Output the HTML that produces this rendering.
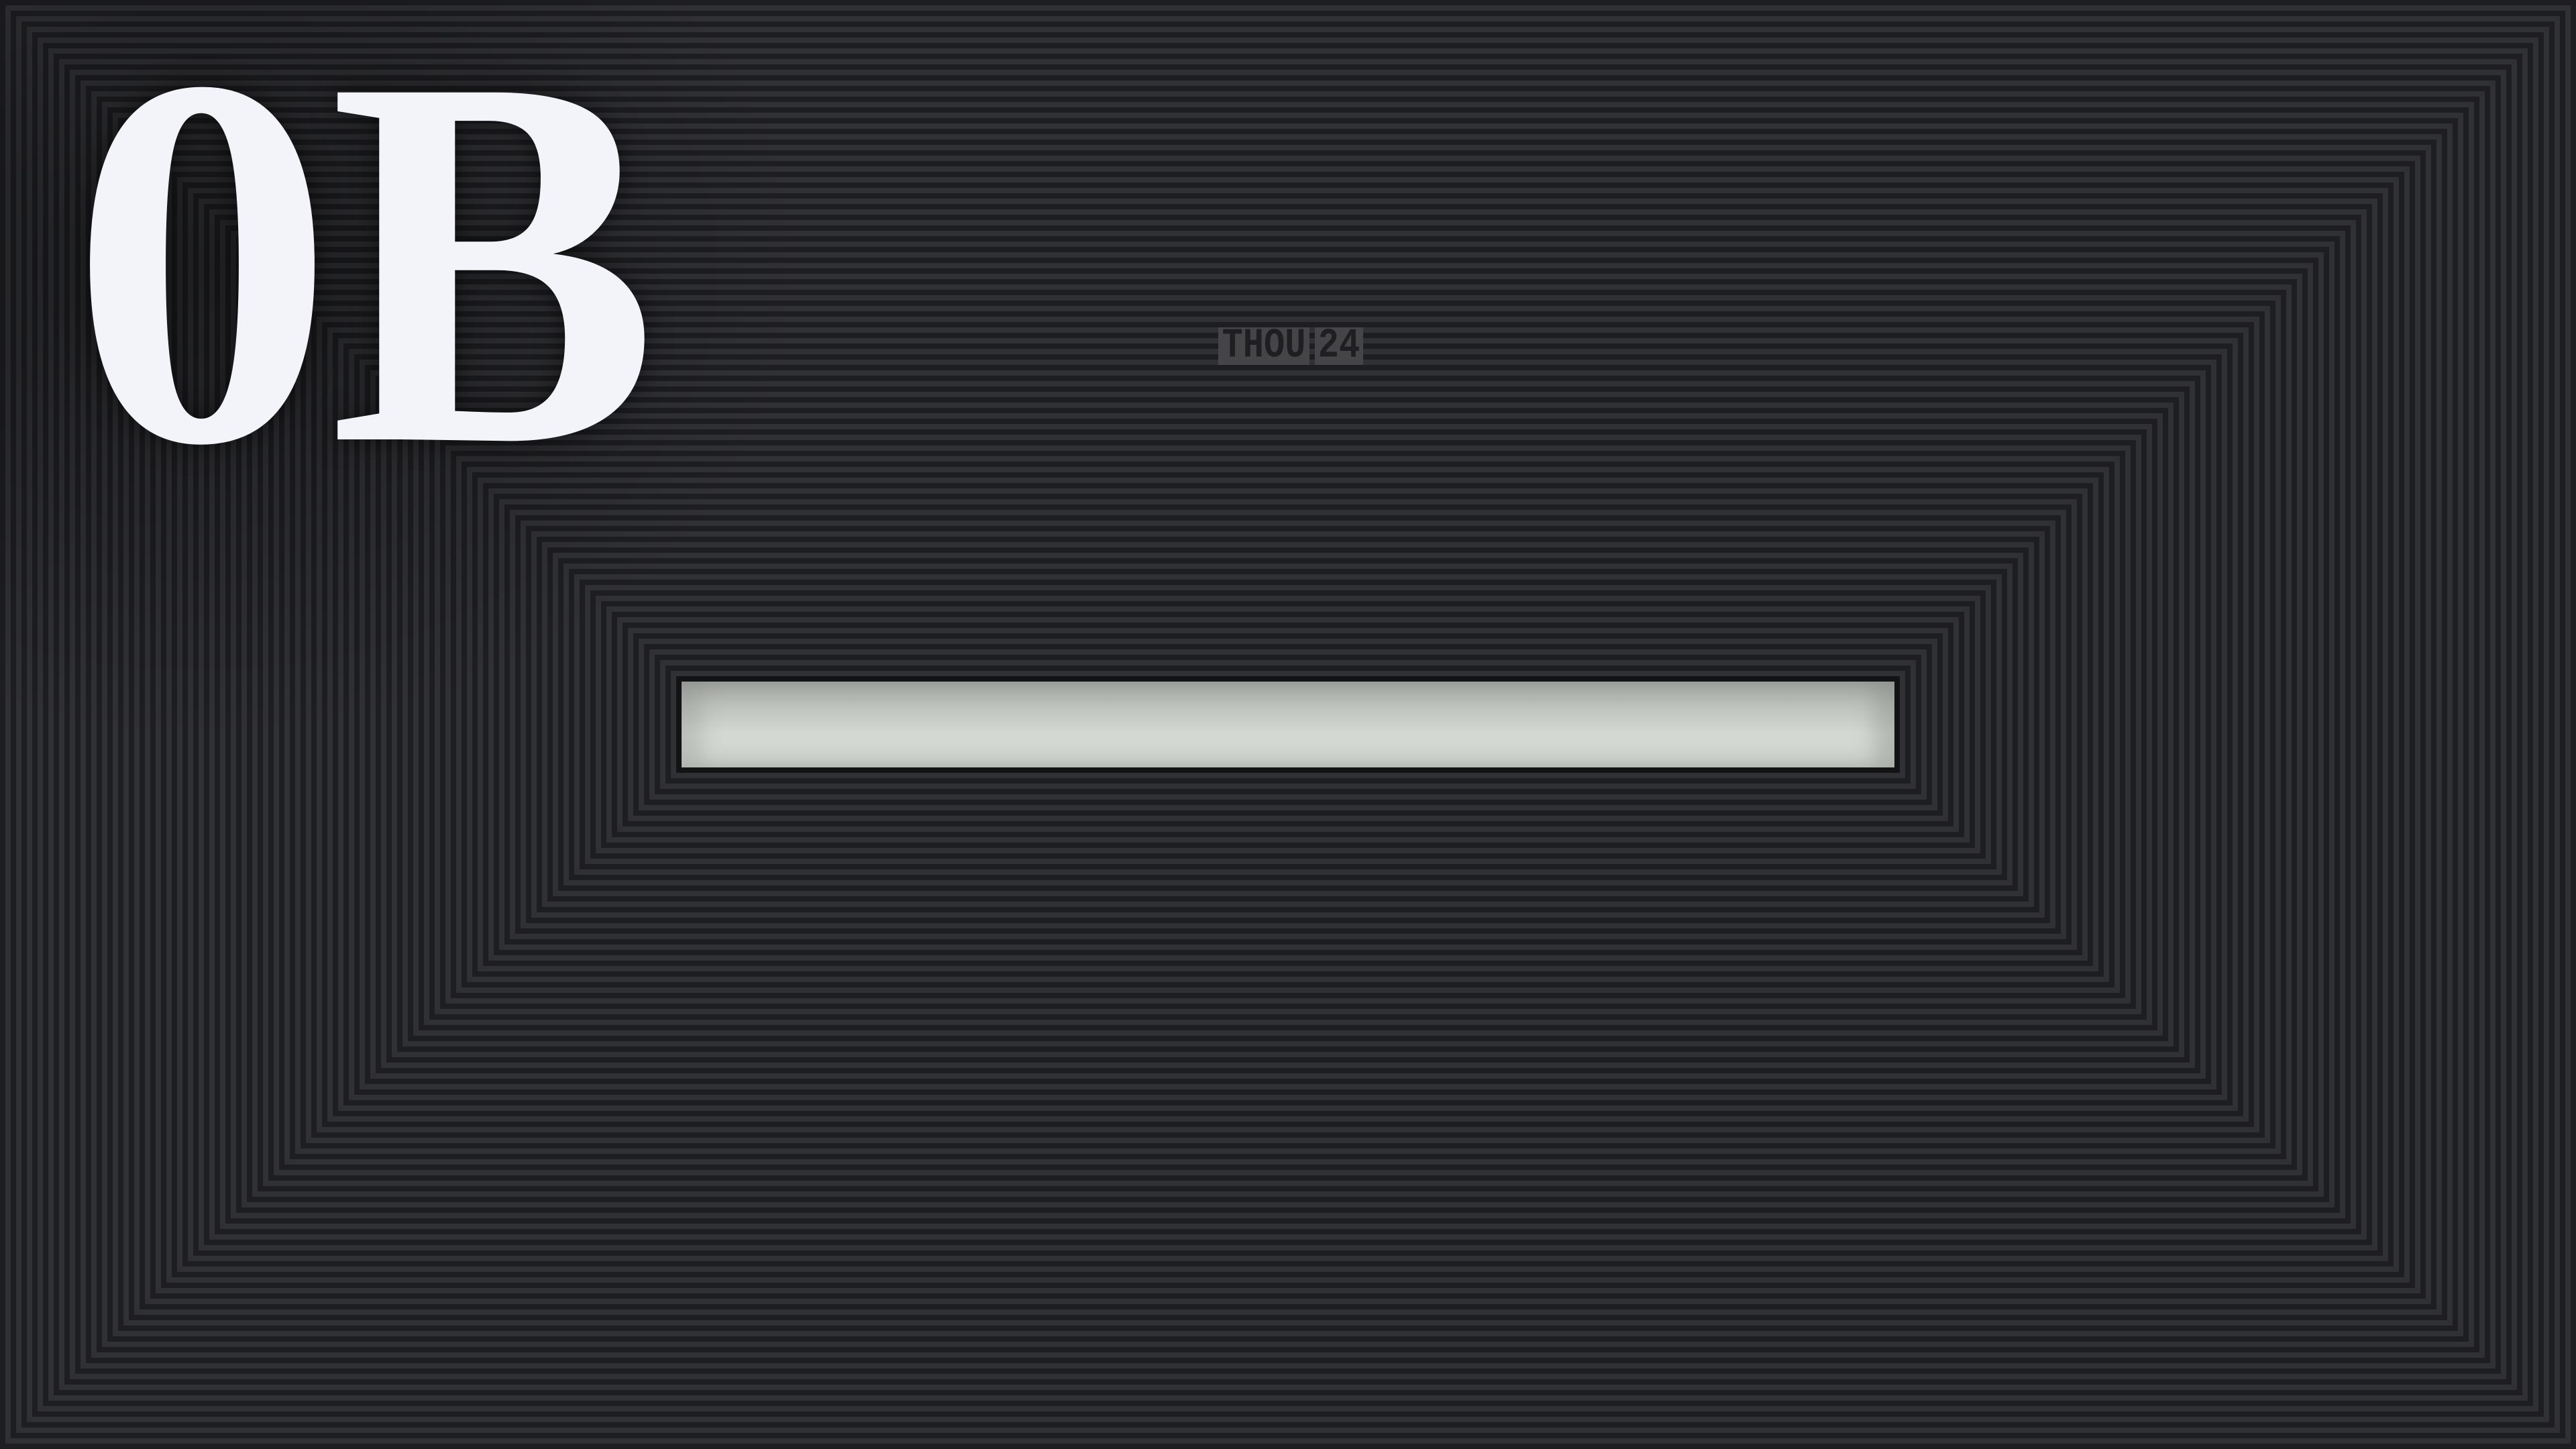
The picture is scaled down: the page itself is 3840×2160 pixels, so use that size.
<!DOCTYPE html>
<html><head><meta charset="utf-8"><style>
html,body{margin:0;padding:0;width:3840px;height:2160px;overflow:hidden;background:#1e1e22;}
.tri{position:absolute;left:0;top:0;width:3840px;height:2160px}
.t{clip-path:polygon(0 0,3840px 0,2832px 1008px,1008px 1008px);background:repeating-linear-gradient(180deg,#1e1e22 0 8px,#303135 8px 16px)}
.b{clip-path:polygon(0 2160px,3840px 2160px,2832px 1152px,1008px 1152px);background:repeating-linear-gradient(0deg,#1e1e22 0 8px,#303135 8px 16px)}
.l{clip-path:polygon(0 0,1008px 1008px,1008px 1152px,0 2160px);background:repeating-linear-gradient(90deg,#1e1e22 0 8px,#303135 8px 16px)}
.r{clip-path:polygon(3840px 0,2832px 1008px,2832px 1152px,3840px 2160px);background:repeating-linear-gradient(270deg,#1e1e22 0 8px,#303135 8px 16px)}
.vig{position:absolute;left:0;top:0;width:3840px;height:2160px;background:radial-gradient(ellipse 900px 700px at 300px 400px,rgba(0,0,0,.35),rgba(0,0,0,0));}
.big{position:absolute;left:104px;top:-6px;font-family:"Liberation Serif",serif;font-weight:bold;font-size:790px;line-height:790px;color:#f2f4f9;letter-spacing:-8px;text-shadow:0 0 40px rgba(0,0,0,.55);white-space:nowrap}
.big span{display:inline-block;transform:scaleX(0.93);transform-origin:0 0}
.tag{position:absolute;top:488px;height:56px;background:#454548;color:#1f1f23;font-family:"Liberation Mono",monospace;font-weight:bold;font-size:52px;line-height:56px;text-align:center}
.tag span{display:inline-block;transform:scaleY(1.2)}
.bar{position:absolute;left:1008px;top:1008px;width:1808px;height:128px;border:8px solid #131316;background:linear-gradient(180deg,#a6a9a5 0%,#bfc3bd 30%,#d4d8d2 60%,#d2d6d0 100%);box-shadow:inset -30px 0 30px rgba(120,125,120,.35),inset 30px 0 30px rgba(120,125,120,.25)}
</style></head><body>
<div class="tri t"></div>
<div class="tri b"></div>
<div class="tri l"></div>
<div class="tri r"></div>
<div class="vig"></div>
<div class="big">0<span>B</span></div>
<div class="tag" style="left:1816px;width:136px"><span>THOU</span></div>
<div class="tag" style="left:1960px;width:72px"><span>24</span></div>
<div class="bar"></div>
</body></html>
